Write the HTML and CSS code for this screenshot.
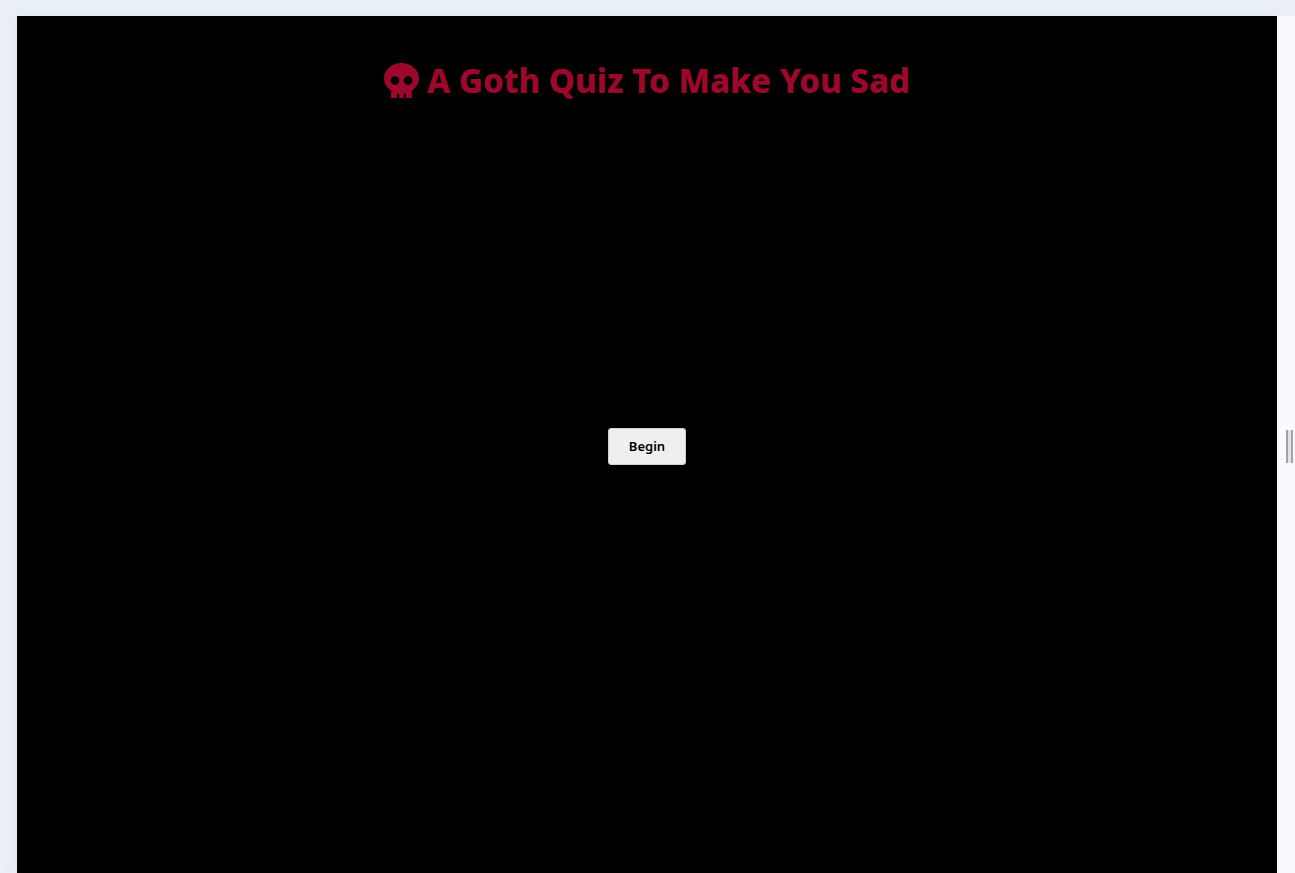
FILE: index.html
```html
<!DOCTYPE html>
<html lang="en">
<head>
<meta charset="utf-8">
<title>A Goth Quiz To Make You Sad</title>
<link rel="stylesheet" href="styles.css">
</head>
<body>
<div class="workspace">
  <main class="quiz">
    <h1 class="title">
      <svg class="skull" viewBox="0 0 512 512" aria-hidden="true"><path d="M256 0C114.6 0 0 100.3 0 224c0 70.1 36.9 132.6 94.5 173.7 9.6 6.9 15.2 18.1 13.5 29.9l-9.4 66.2c-1.4 9.6 6 18.2 15.7 18.2H192v-56c0-4.4 3.6-8 8-8h16c4.4 0 8 3.6 8 8v56h64v-56c0-4.4 3.6-8 8-8h16c4.4 0 8 3.6 8 8v56h77.7c9.7 0 17.1-8.6 15.7-18.2l-9.4-66.2c-1.7-11.7 3.8-23 13.5-29.9C475.1 356.6 512 294.1 512 224 512 100.3 397.4 0 256 0zm-96 320c-35.3 0-64-28.7-64-64s28.7-64 64-64 64 28.7 64 64-28.7 64-64 64zm192 0c-35.3 0-64-28.7-64-64s28.7-64 64-64 64 28.7 64 64-28.7 64-64 64z"/></svg>
      <span>A Goth Quiz To Make You Sad</span>
    </h1>
    <button class="begin" type="button">Begin</button>
  </main>
  <div class="resizer" role="separator" aria-orientation="vertical">
    <span class="grip"></span>
  </div>
</div>
</body>
</html>
```
FILE: styles.css
```css
* {
  box-sizing: border-box;
}

body {
  margin: 0;
  background: #ebf0f8;
  font-family: "Noto Sans", "Open Sans", sans-serif;
}

.workspace {
  display: grid;
  grid-template-columns: 1fr 18px;
  min-height: 100vh;
  padding: 16px 0 0 17px;
}

.quiz {
  display: grid;
  grid-template-rows: 1fr auto 1fr;
  justify-items: center;
  padding-top: 3px;
  background: #000;
  box-shadow: 0 0 14px rgba(70, 90, 110, 0.08);
}

.title {
  display: flex;
  align-items: flex-start;
  gap: 8px;
  margin: 0;
  padding-top: 44px;
  align-self: start;
  color: #9d072b;
  font-size: 33px;
  font-weight: 800;
  line-height: 36px;
}

.skull {
  width: 35px;
  height: 35px;
  fill: currentColor;
}

.begin {
  height: 37px;
  padding: 0 20px;
  border: 1px solid #d0d0d0;
  border-radius: 3px;
  background: #efefef;
  color: #000;
  font-family: inherit;
  font-size: 13px;
  font-weight: 600;
}

.resizer {
  display: flex;
  align-items: center;
  justify-content: flex-end;
  padding: 4px 2px 0 0;
  background: #f9faff;
  z-index: 1;
}

.grip {
  width: 7px;
  height: 33px;
  border: solid #a3a3a3;
  border-width: 0 2px;
  background: #e4e4e8;
}
```
